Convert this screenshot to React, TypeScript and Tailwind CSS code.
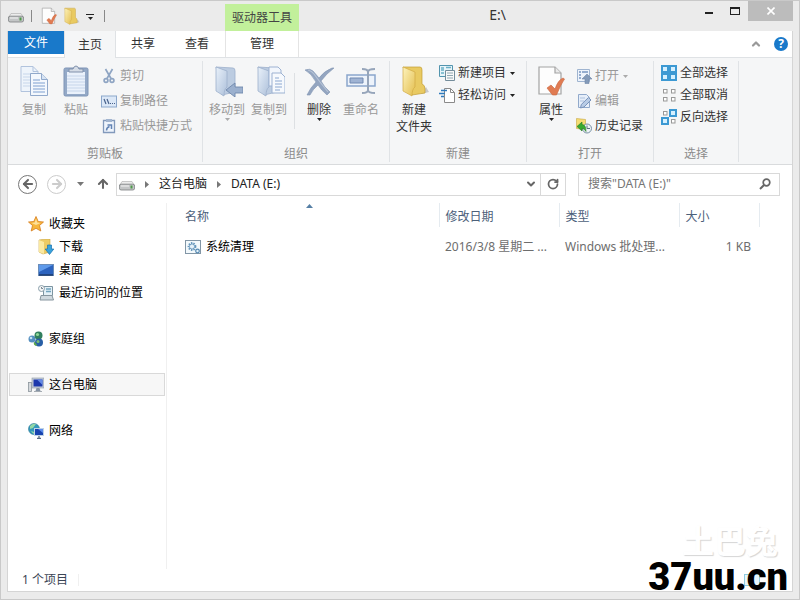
import React from "react";
import { ArrowLeft, ArrowRight, ArrowUp, ChevronDown, ChevronUp, RotateCw } from "lucide-react";

interface IconProps {
  className?: string;
}

function DriveIcon({ className = "h-4 w-4" }: IconProps) {
  return (
    <svg viewBox="0 0 16 16" className={className} aria-hidden="true">
      <path d="M3 5.500h10l2.500 4H.500z" fill="#ececec" stroke="#b5b5b5" strokeWidth=".7" />
      <rect x=".4" y="8.200" width="15.200" height="5.800" rx="1.800" fill="#c3c5c6" stroke="#7b7f80" strokeWidth=".8" />
      <path d="M2 10h8" stroke="#f4f4f4" strokeWidth="1" />
      <rect x="11.500" y="9.500" width="2" height="3" fill="#4f9a4a" />
    </svg>
  );
}

function PropertiesIcon({ className = "h-4 w-4" }: IconProps) {
  return (
    <svg viewBox="0 0 32 32" className={className} aria-hidden="true">
      <path d="M4 2h16l6 6v21H4z" fill="#fdfdfd" stroke="#a3a3a3" strokeWidth="1.200" />
      <path d="M20 2v6h6" fill="#eaeaea" stroke="#a3a3a3" strokeWidth="1.200" />
      <path d="M12 23l4-3 4 4q3-9 8-11l1.500 1q-4 6-8 16h-4z" fill="#e07b52" stroke="#c9643c" strokeWidth=".6" />
    </svg>
  );
}

function FolderIcon({ className = "h-8 w-8" }: IconProps) {
  return (
    <svg viewBox="0 0 32 32" className={className} aria-hidden="true">
      <defs>
        <linearGradient id="folder-front" x1="0" x2="1" y1="0" y2="1">
          <stop offset="0" stopColor="#fdf3bd" />
          <stop offset="1" stopColor="#e3bd4c" />
        </linearGradient>
      </defs>
      <path d="M23 29l8-2-3-5z" fill="#c9c9c9" />
      <path d="M5 2h17q2 0 2 3v14q3 1 3 5v4l-13 2z" fill="#e9ca62" stroke="#c39d35" strokeWidth=".7" />
      <path d="M5 2l12 5v15q-3 2-3 9l-9-5z" fill="url(#folder-front)" stroke="#d1ab45" strokeWidth=".7" />
    </svg>
  );
}

function PaleFolder() {
  return (
    <>
      <defs>
        <linearGradient id="pale-folder" x1="0" x2="1" y1="0" y2="1">
          <stop offset="0" stopColor="#e9f1fa" />
          <stop offset="1" stopColor="#adc0da" />
        </linearGradient>
      </defs>
      <path d="M5 2l17 1q2 0 2 3v21l-13 3z" fill="#bccce1" stroke="#9db0cb" strokeWidth=".8" />
      <path d="M5 2l11 4v16q-3 2-3 9l-8-5z" fill="url(#pale-folder)" stroke="#9db0cb" strokeWidth=".8" />
    </>
  );
}

function MoveToIcon() {
  return (
    <svg viewBox="0 0 32 32" className="h-8 w-8" aria-hidden="true">
      <PaleFolder />
      <path d="M15 25l9-7v4h8v6h-8v4z" fill="#9bb0ce" stroke="#7188ab" strokeWidth=".9" />
    </svg>
  );
}

function CopyToIcon() {
  return (
    <svg viewBox="0 0 32 32" className="h-8 w-8" aria-hidden="true">
      <PaleFolder />
      <path d="M16 2h9l3 3v16H16z" fill="#f2f6fc" stroke="#9db2d2" />
      <path d="M19 8h9l4 4v16H19z" fill="#f6f9fd" stroke="#9db2d2" />
      <path d="M22 13h4M22 16h7M22 19h7M22 22h7M22 25h5" stroke="#8ba7d0" />
    </svg>
  );
}

function CopyIcon() {
  return (
    <svg viewBox="0 0 32 32" className="h-8 w-8" aria-hidden="true">
      <path d="M3 1.500h12l5 5v20H3z" fill="#eef4fb" stroke="#b1c3dd" />
      <path d="M15 1.500v5h5" fill="none" stroke="#b1c3dd" />
      <path d="M5 9h8M5 12h7M5 15h7M5 18h7M5 21h7" stroke="#c7d6ea" />
      <path d="M12.500 8.500h11l6 6v16h-17z" fill="#f4f8fd" stroke="#91a9cb" />
      <path d="M23.500 8.500v6h6" fill="#d7e4f4" stroke="#91a9cb" />
      <path d="M15 15h7M15 18h12M15 21h12M15 24h12M15 27h12" stroke="#7fa0d0" />
    </svg>
  );
}

function PasteIcon() {
  return (
    <svg viewBox="0 0 32 32" className="h-8 w-8" aria-hidden="true">
      <rect x="4" y="3" width="24" height="28" rx="1.500" fill="#94a9c7" stroke="#7f95b7" />
      <path d="M7 7h18v22H7z" fill="#eaf1fb" />
      <path d="M7 11h18M7 14h18M7 17h18M7 20h18M7 23h18M7 26h18" stroke="#c6d5ea" />
      <path d="M9 7V4h4q1-3 3-3t3 3h4v3z" fill="#d5dce6" stroke="#8091ac" />
    </svg>
  );
}

function CutIcon() {
  return (
    <svg viewBox="0 0 16 16" className="h-4 w-4" fill="none" stroke="#8fa5c3" strokeWidth="1.700" aria-hidden="true">
      <path d="M4.500 1l5.500 9.500M11.500 1L6 10.500" />
      <circle cx="5" cy="12.500" r="1.900" />
      <circle cx="11" cy="12.500" r="1.900" />
    </svg>
  );
}

function CopyPathIcon() {
  return (
    <svg viewBox="0 0 16 16" className="h-4 w-4" aria-hidden="true">
      <rect x=".5" y="3" width="15" height="11" fill="#dce8f7" stroke="#8ca7cb" />
      <path d="M3 6l2 5M6 6l2 5" stroke="#49628c" strokeWidth="1.200" />
      <path d="M9 10.500h1M11 10.500h1M13 10.500h1" stroke="#49628c" strokeWidth="1.200" />
    </svg>
  );
}

function PasteShortcutIcon() {
  return (
    <svg viewBox="0 0 16 16" className="h-4 w-4" aria-hidden="true">
      <path d="M2.500 2.500h11v12h-11z" fill="#eef4fc" stroke="#8299bb" strokeWidth="1.300" />
      <path d="M5 1h6v3H5z" fill="#a1b4cf" />
      <path d="M5.500 12.500q0-3 3-4M6.500 7h4v4" fill="none" stroke="#6283b4" strokeWidth="1.500" />
    </svg>
  );
}

function DeleteIcon() {
  return (
    <svg viewBox="0 0 32 32" className="h-8 w-8" aria-hidden="true">
      <path d="M2 5q5-2 8 1l6 7q5-7 13-10h2q-8 6-13 13 3 6 9 11l-3 3q-6-5-9-10-5 4-8 10H4q3-7 9-13Q8 8 2 5z" fill="#93a5c0" stroke="#8093b1" strokeWidth=".6" />
      <path d="M5 5q4 1 6 4l6 8 8 10" stroke="#b6c3d6" fill="none" strokeWidth="1.200" />
    </svg>
  );
}

function RenameIcon() {
  return (
    <svg viewBox="0 0 32 32" className="h-8 w-8" aria-hidden="true">
      <path d="M2 10h28v11H2z" fill="#edf3fb" stroke="#8ba6cd" strokeWidth="1.500" />
      <path d="M5 13h13v5H5z" fill="#9fb3d3" stroke="#7189b1" />
      <path d="M17 4q6 0 6 3v18q0 3-6 3M30 4q-7 0-7 3v18q0 3 7 3" fill="none" stroke="#96a5ba" strokeWidth="2" />
    </svg>
  );
}

function NewItemIcon() {
  return (
    <svg viewBox="0 0 16 16" className="h-4 w-4" aria-hidden="true">
      <path d="M.5.500h13v11H.5z" fill="#e7f4f9" stroke="#5294ae" />
      <path d="M2 3h3M2 5h3M2 8h3M7 2.500h5" stroke="#6bb0c6" strokeWidth="1.500" />
      <path d="M6.500 5.500h9v10h-9z" fill="#f8f8f8" stroke="#748d9b" />
      <path d="M8 8h6M8 10.500h6M8 13h6" stroke="#91a8b2" />
    </svg>
  );
}

function EasyAccessIcon() {
  return (
    <svg viewBox="0 0 16 16" className="h-4 w-4" aria-hidden="true">
      <path d="M5.500 1.500h6l4 4v10h-10z" fill="#fff" stroke="#8a8a8a" />
      <path d="M11.500 1.500v4h4" fill="none" stroke="#8a8a8a" />
      <path d="M2 3.500h6M0 6.500h6M2 9.500h3" stroke="#307bbd" strokeWidth="1.400" />
    </svg>
  );
}

function OpenIcon() {
  return (
    <svg viewBox="0 0 16 16" className="h-4 w-4" aria-hidden="true">
      <path d="M1.500 1.500h12v12h-12z" fill="#edf3fb" stroke="#9fb4d0" />
      <path d="M3 4h2M3 7h2M3 10h2M6 4h6" stroke="#7896c1" strokeWidth="1.500" />
      <path d="M11 6l5 5h-3v4.500H9V11H6z" fill="#839ab9" stroke="#6f86a8" strokeWidth=".6" />
    </svg>
  );
}

function EditIcon() {
  return (
    <svg viewBox="0 0 16 16" className="h-4 w-4" aria-hidden="true">
      <path d="M2.500 1.500h8l3 3v10h-11z" fill="#e6eef9" stroke="#91a9cb" />
      <path d="M4 5h5M4 8h4" stroke="#aec2df" />
      <path d="M12.500 4.500L15 7l-7 7-3.500 1 .8-3.500z" fill="#b8cbe5" stroke="#7893bb" />
    </svg>
  );
}

function HistoryIcon() {
  return (
    <svg viewBox="0 0 16 16" className="h-4 w-4" aria-hidden="true">
      <path d="M.5.500l9 1v10l-9-1z" fill="#f5dd73" stroke="#c6a440" strokeWidth=".6" />
      <circle cx="11" cy="10.500" r="4.500" fill="#eef3f7" stroke="#7890a3" />
      <path d="M11 7.500v3h3" fill="none" stroke="#5c7180" />
      <path d="M1 8.500l5-4.500v2.500q4 0 4 7-2-3.500-4-3V13z" fill="#38aa31" stroke="#237a22" strokeWidth=".6" />
    </svg>
  );
}

function SelectIcon({ filled }: { filled: boolean[] }) {
  return (
    <svg viewBox="0 0 16 16" className="h-4 w-4" aria-hidden="true">
      {filled.map((on, i) => {
        const x = (i % 2) * 8;
        const y = Math.floor(i / 2) * 8;
        return on ? (
          <g key={i}>
            <rect x={x} y={y} width="8" height="8" fill="#3c99d3" />
            <rect x={x + 2} y={y + 2} width="4" height="4" fill="#d5f0ff" />
          </g>
        ) : (
          <rect key={i} x={x + 2.5} y={y + 2.5} width="3.500" height="3.500" fill="#fff" stroke="#999" />
        );
      })}
    </svg>
  );
}

function StarIcon() {
  return (
    <svg viewBox="0 0 16 16" className="h-4 w-4" aria-hidden="true">
      <path d="M8 .5l2.200 5 5.300.5-4 3.500 1.300 5.500L8 12.300 3.200 15l1.300-5.500-4-3.500 5.300-.5z" fill="#f7b63c" stroke="#d57c1d" strokeWidth=".8" />
      <path d="M8 2.500l1.200 4 3.300.5L8 9 3.500 7l3.300-.5z" fill="#ffe09a" />
    </svg>
  );
}

function DownloadsIcon() {
  return (
    <svg viewBox="0 0 16 16" className="h-4 w-4" aria-hidden="true">
      <path d="M1 1l6-1h5v13l-7 2-4-2z" fill="#eccb64" stroke="#c9a545" strokeWidth=".6" />
      <path d="M1 1l5 2v12l-5-2z" fill="#fae9a2" />
      <path d="M9.500 6h4v4h2.300L11.500 15.500 7.200 10h2.300z" fill="#38a2dc" stroke="#1870ae" strokeWidth=".7" />
    </svg>
  );
}

function DesktopIcon() {
  return (
    <svg viewBox="0 0 16 16" className="h-4 w-4" aria-hidden="true">
      <rect x=".5" y="2.500" width="15" height="11" fill="#2c63be" stroke="#6b8db9" />
      <path d="M1 3h14L1 10z" fill="#5f9aea" />
      <path d="M1 13h14" stroke="#1d3b6c" strokeWidth="1.500" />
    </svg>
  );
}

function RecentIcon() {
  return (
    <svg viewBox="0 0 16 16" className="h-4 w-4" aria-hidden="true">
      <path d="M5.500 1.500h9v9h-9z" fill="#e5f1f8" stroke="#7c94a1" />
      <path d="M8 4h5M8 6.500h5" stroke="#72a4bd" strokeWidth="1.300" />
      <path d="M3 10.500h11l1.500 4.500H2z" fill="#d0d9df" stroke="#87969f" />
      <circle cx="3.500" cy="3.500" r="3" fill="#f5f5f5" stroke="#8ba0ac" />
      <path d="M3.500 2v1.500H5" fill="none" stroke="#566b78" strokeWidth=".8" />
    </svg>
  );
}

function HomegroupIcon() {
  return (
    <svg viewBox="0 0 16 16" className="h-4 w-4" aria-hidden="true">
      <circle cx="4" cy="8" r="3.500" fill="#548fc0" />
      <circle cx="10.500" cy="4.500" r="4" fill="#317f5e" />
      <circle cx="11" cy="11.500" r="4" fill="#285fa6" />
      <circle cx="9.500" cy="3.500" r="1.600" fill="#91d998" />
      <circle cx="3" cy="7" r="1.300" fill="#c4e3f4" />
      <circle cx="10" cy="10.500" r="1.500" fill="#78bd75" />
      <path d="M6 10.500l3 3-1 1.500q-3-1-2-4.500z" fill="#5ba64a" />
    </svg>
  );
}

function ComputerIcon() {
  return (
    <svg viewBox="0 0 16 16" className="h-4 w-4" aria-hidden="true">
      <rect x=".5" y="5.500" width="3" height="9" fill="#d4d8dc" stroke="#8c959c" strokeWidth=".8" />
      <rect x="4" y="1" width="12" height="10" fill="#c7ced7" stroke="#8b98a8" strokeWidth=".6" />
      <path d="M5.500 2.500h9v7h-9z" fill="#1c38ac" />
      <path d="M9 2.500h5.500V8z" fill="#6589e5" />
      <path d="M8.500 11h3l1 3h-5z" fill="#8593a4" />
      <path d="M6 14.500h8" stroke="#a4abb2" />
    </svg>
  );
}

function NetworkIcon() {
  return (
    <svg viewBox="0 0 16 16" className="h-4 w-4" aria-hidden="true">
      <circle cx="6" cy="6" r="5.500" fill="#3498bb" stroke="#2c7893" strokeWidth=".6" />
      <path d="M2 3q3-3 6-2l-3 4-3 1zM3 8l3 1v2q-2-1-3-3z" fill="#93d8a5" />
      <rect x="6" y="5" width="10" height="8" fill="#bfd2e5" />
      <path d="M7 6h8v6H7z" fill="#1843af" />
      <path d="M10 6h5v4z" fill="#5c8cec" />
      <path d="M11 13v2M9 15.500h4" stroke="#596b82" strokeWidth="1.300" />
    </svg>
  );
}

function BatchFileIcon() {
  return (
    <svg viewBox="0 0 16 16" className="h-4 w-4" aria-hidden="true">
      <rect x=".5" y="1.500" width="15" height="13" fill="#f3f9fc" stroke="#8296a6" />
      <circle cx="7" cy="7.500" r="3.500" fill="none" stroke="#6597bd" strokeWidth="1.800" strokeDasharray="1.400 1.100" />
      <circle cx="7" cy="7.500" r="2.600" fill="#e5f2fa" stroke="#5488b1" strokeWidth=".8" />
      <circle cx="12.500" cy="12" r="1.800" fill="#e5f2fa" stroke="#5488b1" strokeWidth="1.200" />
    </svg>
  );
}

function Caret({ className = "text-[#222]" }: IconProps) {
  return (
    <svg viewBox="0 0 5 3" className={`h-[3px] w-[5px] ${className}`} aria-hidden="true">
      <path d="M0 0h5L2.500 3z" fill="currentColor" />
    </svg>
  );
}

interface GroupProps {
  title: string;
  className: string;
  children: React.ReactNode;
}

function Group({ title, className, children }: GroupProps) {
  return (
    <section className={`mt-[3px] mb-0.5 flex flex-col border-r border-[#e0e3e6] ${className}`}>
      <div className="flex flex-1 pt-1">{children}</div>
      <h2 className="text-center leading-4 text-[#8b8b8b]">{title}</h2>
    </section>
  );
}

interface CommandProps {
  icon: React.ReactNode;
  label: React.ReactNode;
  disabled?: boolean;
  menu?: boolean;
}

function BigCommand({ icon, label, disabled, menu }: CommandProps) {
  return (
    <button
      disabled={disabled}
      className="flex w-[42px] flex-col items-center whitespace-nowrap text-[#333] disabled:text-[#999]"
    >
      {icon}
      <span className="mt-1 leading-[17px]">{label}</span>
      {menu && <Caret className={disabled ? "text-[#aaa]" : "text-[#222]"} />}
    </button>
  );
}

function SmallCommand({ icon, label, disabled, menu }: CommandProps) {
  return (
    <button
      disabled={disabled}
      className="flex items-center gap-[3px] whitespace-nowrap leading-4 text-[#333] disabled:text-[#999]"
    >
      {icon}
      <span>{label}</span>
      {menu && <Caret className={disabled ? "ml-px text-[#aaa]" : "ml-px text-[#222]"} />}
    </button>
  );
}

function TitleBar() {
  return (
    <header className="flex h-[30px] shrink-0">
      <div className="flex w-[218px] items-center">
        <button aria-label="驱动器" className="ml-px">
          <DriveIcon />
        </button>
        <span className="ml-[7px] h-3 w-px bg-[#888]" />
        <button aria-label="属性" className="ml-2">
          <PropertiesIcon className="h-[18px] w-[18px]" />
        </button>
        <button aria-label="新建文件夹" className="ml-1">
          <FolderIcon className="h-[18px] w-[18px]" />
        </button>
        <button aria-label="自定义快速访问工具栏" className="ml-1.5 flex w-2 flex-col items-center gap-0.5 pt-0.5">
          <span className="h-px w-2 bg-[#222]" />
          <Caret />
        </button>
        <span className="ml-2.5 h-3 w-px bg-[#888]" />
      </div>
      <div className="mt-[3px] flex w-[74px] items-center justify-center bg-[#c2f09b] text-[#444]">驱动器工具</div>
      <h1 className="flex-1 text-center text-sm leading-7 text-[#333]">E:\</h1>
      <div className="flex items-start">
        <button aria-label="最小化" className="flex h-5 w-[26px] items-center justify-center pt-1">
          <span className="h-0.5 w-2 bg-[#222]" />
        </button>
        <button aria-label="最大化" className="flex h-5 w-[26px] items-center justify-center">
          <span className="h-2 w-2.5 border border-t-2 border-[#222]" />
        </button>
        <button aria-label="关闭" className="flex h-5 w-[45px] items-center justify-center bg-[#bcbcbc]">
          <svg viewBox="0 0 8 8" className="h-2 w-2" stroke="#fff" strokeWidth="1.600" aria-hidden="true">
            <path d="M.5.500l7 7M7.500.500l-7 7" />
          </svg>
        </button>
      </div>
    </header>
  );
}

function Tabs() {
  return (
    <nav className="flex h-[27px] shrink-0 items-stretch border-b border-[#dfe2e5] text-[#333]">
      <button className="h-[23px] w-14 bg-[#1979ca] text-white">文件</button>
      <button className="-mb-px w-[52px] border-x border-[#dfe2e5] bg-[#f5f6f7]">主页</button>
      <button className="w-[54px]">共享</button>
      <button className="w-[54px]">查看</button>
      <button className="ml-px w-[74px] border-x border-[#e4e4e4]">管理</button>
      <div className="ml-auto flex items-center gap-3 pr-1">
        <button aria-label="最小化功能区">
          <ChevronUp className="h-3 w-3 text-[#999]" strokeWidth={4.5} />
        </button>
        <button
          aria-label="帮助"
          className="h-3.5 w-3.5 rounded-full bg-[#1979ca] text-center text-xs leading-[14px] font-bold text-white"
        >
          ?
        </button>
      </div>
    </nav>
  );
}

function Ribbon() {
  return (
    <div className="flex h-[107px] shrink-0 border-b border-[#d9dbdd] bg-[#f5f6f7]">
      <Group title="剪贴板" className="w-[195px]">
        <div className="flex pl-[5px]">
          <BigCommand icon={<CopyIcon />} label="复制" disabled />
          <BigCommand icon={<PasteIcon />} label="粘贴" disabled />
        </div>
        <div className="flex flex-col gap-[9px] pt-[3px] pl-1">
          <SmallCommand icon={<CutIcon />} label="剪切" disabled />
          <SmallCommand icon={<CopyPathIcon />} label="复制路径" disabled />
          <SmallCommand icon={<PasteShortcutIcon />} label="粘贴快捷方式" disabled />
        </div>
      </Group>
      <Group title="组织" className="w-[187px]">
        <div className="flex pl-[3px]">
          <BigCommand icon={<MoveToIcon />} label="移动到" disabled menu />
          <BigCommand icon={<CopyToIcon />} label="复制到" disabled menu />
        </div>
        <span className="mr-[3px] ml-1 mt-2 h-14 w-px bg-[#dde0e3]" />
        <BigCommand icon={<DeleteIcon />} label="删除" menu />
        <BigCommand icon={<RenameIcon />} label="重命名" disabled />
      </Group>
      <Group title="新建" className="w-[137px]">
        <div className="pl-[3px]">
          <BigCommand
            icon={<FolderIcon />}
            label={
              <>
                新建
                <br />
                文件夹
              </>
            }
          />
        </div>
        <div className="flex flex-col gap-1.5 pl-1">
          <SmallCommand icon={<NewItemIcon />} label="新建项目" menu />
          <SmallCommand icon={<EasyAccessIcon />} label="轻松访问" menu />
        </div>
      </Group>
      <Group title="打开" className="w-[127px]">
        <div className="pl-[3px]">
          <BigCommand icon={<PropertiesIcon className="h-8 w-8" />} label="属性" menu />
        </div>
        <div className="flex flex-col gap-[9px] pt-[3px] pl-1">
          <SmallCommand icon={<OpenIcon />} label="打开" disabled menu />
          <SmallCommand icon={<EditIcon />} label="编辑" disabled />
          <SmallCommand icon={<HistoryIcon />} label="历史记录" />
        </div>
      </Group>
      <Group title="选择" className="w-[85px]">
        <div className="flex flex-col gap-1.5 pl-[7px]">
          <SmallCommand icon={<SelectIcon filled={[true, true, true, true]} />} label="全部选择" />
          <SmallCommand icon={<SelectIcon filled={[false, false, false, false]} />} label="全部取消" />
          <SmallCommand icon={<SelectIcon filled={[false, true, true, false]} />} label="反向选择" />
        </div>
      </Group>
    </div>
  );
}

function AddressBar() {
  return (
    <div className="flex h-[38px] shrink-0 items-center pr-3 pl-2.5">
      <button
        aria-label="后退"
        className="flex h-[19px] w-[19px] items-center justify-center rounded-full border border-[#777] text-[#666]"
      >
        <ArrowLeft className="h-3.5 w-3.5" strokeWidth={3.5} />
      </button>
      <button
        aria-label="前进"
        className="ml-2.5 flex h-[19px] w-[19px] items-center justify-center rounded-full border border-[#ccc] text-[#ccc]"
      >
        <ArrowRight className="h-3.5 w-3.5" strokeWidth={3.5} />
      </button>
      <button aria-label="最近浏览的位置" className="ml-[11px]">
        <svg viewBox="0 0 7 4" className="h-1 w-[7px]" aria-hidden="true">
          <path d="M0 0h7L3.500 4z" fill="#777" />
        </svg>
      </button>
      <button aria-label="上移" className="ml-3">
        <ArrowUp className="h-3.5 w-3.5 text-[#666]" strokeWidth={3.5} />
      </button>
      <div className="ml-1.5 flex h-[23px] flex-1 items-center border border-[#d9d9d9] pl-0.5 text-[#222]">
        <DriveIcon />
        <svg viewBox="0 0 4 7" className="mx-2.5 h-[7px] w-1" aria-hidden="true">
          <path d="M0 0l4 3.500L0 7z" fill="#777" />
        </svg>
        <a href="#computer">这台电脑</a>
        <svg viewBox="0 0 4 7" className="mx-2.5 h-[7px] w-1" aria-hidden="true">
          <path d="M0 0l4 3.500L0 7z" fill="#777" />
        </svg>
        <a href="#data">DATA (E:)</a>
        <button aria-label="以前的位置" className="ml-auto pr-[3px]">
          <ChevronDown className="h-3 w-3 text-[#666]" strokeWidth={4} />
        </button>
        <button aria-label="刷新" className="flex h-full w-[25px] items-center justify-center border-l border-[#d9d9d9]">
          <RotateCw className="h-3 w-3 text-[#666]" strokeWidth={3.5} />
        </button>
      </div>
      <label className="ml-3 flex h-[23px] w-[202px] items-center border border-[#d9d9d9] pr-2 pl-[9px]">
        <input
          type="text"
          aria-label="搜索"
          placeholder={'搜索"DATA (E:)"'}
          className="min-w-0 flex-1 outline-none placeholder:text-[#767676]"
        />
        <svg viewBox="0 0 12 12" className="h-3 w-3" fill="none" stroke="#666" strokeWidth="1.700" aria-hidden="true">
          <circle cx="7.500" cy="4.500" r="3.300" />
          <path d="M5 7L1 11" strokeWidth="2" />
        </svg>
      </label>
    </div>
  );
}

function Sidebar() {
  return (
    <nav className="flex w-[159px] shrink-0 flex-col gap-[23px] border-r border-[#f0f0f0] pt-[9px] pr-px pl-px text-black">
      <div>
        <a href="#favorites" className="flex h-[23px] items-center gap-[5px] pl-[19px]">
          <StarIcon />
          收藏夹
        </a>
        <a href="#downloads" className="flex h-[23px] items-center gap-[5px] pl-[29px]">
          <DownloadsIcon />
          下载
        </a>
        <a href="#desktop" className="flex h-[23px] items-center gap-[5px] pl-[29px]">
          <DesktopIcon />
          桌面
        </a>
        <a href="#recent" className="flex h-[23px] items-center gap-[5px] pl-[29px]">
          <RecentIcon />
          最近访问的位置
        </a>
      </div>
      <a href="#homegroup" className="flex h-[23px] items-center gap-[5px] pl-[19px]">
        <HomegroupIcon />
        家庭组
      </a>
      <a
        href="#computer"
        className="flex h-[23px] items-center gap-[5px] border border-[#d9d9d9] bg-[#f7f7f7] pl-[18px]"
      >
        <ComputerIcon />
        这台电脑
      </a>
      <a href="#network" className="flex h-[23px] items-center gap-[5px] pl-[19px]">
        <NetworkIcon />
        网络
      </a>
    </nav>
  );
}

function FileList() {
  return (
    <main className="relative min-w-0 flex-1">
      <svg viewBox="0 0 7 4" className="absolute top-px left-[139px] h-1 w-[7px]" aria-hidden="true">
        <path d="M0 4h7L3.500 0z" fill="#557fa5" />
      </svg>
      <table className="w-[592px] table-fixed text-left">
        <thead>
          <tr className="h-6 text-[#4c607a]">
            <th className="w-[272px] border-r border-[#e5ebf0] pt-1 pl-[18px] font-normal">名称</th>
            <th className="w-[120px] border-r border-[#e5ebf0] pt-1 pl-1.5 font-normal">修改日期</th>
            <th className="w-[120px] border-r border-[#e5ebf0] pt-1 pl-1.5 font-normal">类型</th>
            <th className="w-20 border-r border-[#e5ebf0] pt-1 pl-1.5 font-normal">大小</th>
          </tr>
        </thead>
        <tbody>
          <tr className="h-10 text-[#6d6d6d]">
            <td className="pl-[18px] text-black">
              <span className="flex items-center gap-[5px]">
                <BatchFileIcon />
                系统清理
              </span>
            </td>
            <td className="pl-1.5 whitespace-nowrap">2016/3/8 星期二 ...</td>
            <td className="pl-1.5 whitespace-nowrap">Windows 批处理...</td>
            <td className="pr-2 text-right">1 KB</td>
          </tr>
        </tbody>
      </table>
    </main>
  );
}

export default function App() {
  return (
    <div className="relative flex h-screen min-h-[480px] flex-col overflow-hidden border border-[#c9c9c9] bg-[#ebebeb] px-1.5 pb-[7px] font-['Noto_Sans','Noto_Sans_CJK_SC',sans-serif] text-xs">
      <TitleBar />
      <div className="flex min-h-0 flex-1 flex-col border-x border-b border-[#d5d5d5] bg-white">
        <Tabs />
        <Ribbon />
        <AddressBar />
        <div className="flex min-h-0 flex-1">
          <Sidebar />
          <FileList />
        </div>
        <footer className="flex h-[22px] shrink-0 items-center pl-3.5 text-[#3b4555]">
          <span>1 个项目</span>
          <span className="ml-2.5 h-3 w-px bg-[#f0f0f0]" />
          <span className="mr-8 ml-auto h-3 w-4 border border-[#8fcbe0] bg-[#e9f6fb]" />
        </footer>
      </div>

      {/* Watermarks */}
      <div className="pointer-events-none absolute right-[11px] bottom-1 flex flex-col items-end">
        <span className="mr-2.5 text-[32px] leading-9 font-bold text-white [text-shadow:1px_1px_1px_#d5d5d5]">土巴兔</span>
        <span className="font-['Roboto','Liberation_Sans',sans-serif] text-[38px] leading-9 font-black text-black">
          37uu.cn
        </span>
      </div>
    </div>
  );
}
